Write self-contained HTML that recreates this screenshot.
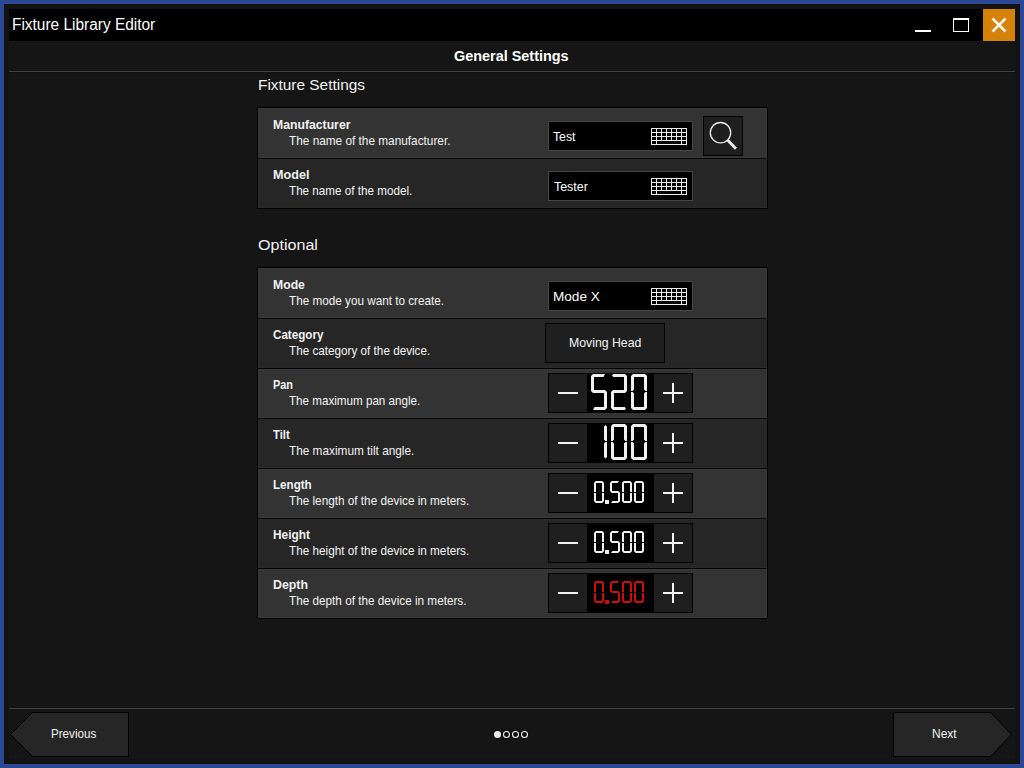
<!DOCTYPE html>
<html><head><meta charset="utf-8"><title>Fixture Library Editor</title>
<style>
html,body{margin:0;padding:0;}
body{width:1024px;height:768px;overflow:hidden;background:#2c4796;position:relative;font-family:"Liberation Sans", sans-serif;}
#win{position:absolute;left:4px;top:4px;width:1016px;height:760px;background:#121212;box-shadow:0 0 0 1px #2f4a9c, inset 0 0 0 1px #100f0a;}
#content{position:absolute;left:9px;top:9px;width:1006px;height:750px;background:#151515;}
#tb{position:absolute;left:9px;top:9px;width:1006px;height:32px;background:#000;}
#close{position:absolute;left:983px;top:9px;width:32px;height:32px;background:#d58308;}
.sep{position:absolute;left:9px;width:1006px;height:1px;background:#454545;box-shadow:0 -1px 0 #111,0 1px 0 #111;}
.t{position:absolute;white-space:nowrap;transform-origin:0 0;display:block;}
.row{position:absolute;left:257px;width:511px;box-sizing:border-box;border:1px solid #000;}
.row.a{background:#333333;box-shadow:inset 0 0 0 1px #393939;}
.row.b{background:#262626;box-shadow:inset 0 0 0 1px #2b2b2b;}
.fld{position:absolute;left:548px;width:145px;height:30px;box-sizing:border-box;border:1px solid #464646;background:#000;}
.kb{position:absolute;left:102px;top:6px;}
.btn{position:absolute;box-sizing:border-box;border:1px solid #000;background:#1f1f1f;}
.num{position:absolute;left:548px;width:145px;height:40px;box-sizing:border-box;background:#000;}
.nb{position:absolute;top:1px;height:38px;width:38px;background:#1f1f1f;}
.nb.l{left:1px;} .nb.r{left:106px;}
.ov{position:absolute;left:0;top:0;}
svg{display:block;}
</style></head><body>
<div id="win"></div><div id="content"></div>
<div id="tb"></div>
<svg style="position:absolute;left:905px;top:9px" width="110" height="32" viewBox="0 0 110 32">
<rect x="78" y="0" width="32" height="32" fill="#d58308"/>
<rect x="10" y="21" width="16" height="2" fill="#fff" shape-rendering="crispEdges"/>
<rect x="48.5" y="9.5" width="15" height="13" fill="none" stroke="#fff" stroke-width="1"/>
<rect x="48" y="9" width="16" height="2" fill="#fff" shape-rendering="crispEdges"/>
<path d="M87.5,9.5 L100.5,22.5 M100.5,9.5 L87.5,22.5" stroke="#f6f2ec" stroke-width="2.7" fill="none"/>
</svg>
<div class="sep" style="top:71px"></div>
<div class="sep" style="top:708px"></div>
<div class="row a" style="top:107px;height:52px"></div><div class="row b" style="top:158px;height:51px"></div>
<div class="row a" style="top:267px;height:52px"></div><div class="row b" style="top:318px;height:51px"></div><div class="row a" style="top:368px;height:51px"></div><div class="row b" style="top:418px;height:51px"></div><div class="row a" style="top:468px;height:51px"></div><div class="row b" style="top:518px;height:51px"></div><div class="row a" style="top:568px;height:51px"></div>
<div class="fld" style="top:121px"><svg class="kb" width="36" height="17" viewBox="0 0 36 17" shape-rendering="crispEdges"><g fill="#ececec"><rect x="0" y="0" width="36" height="1"/><rect x="0" y="4" width="36" height="1"/><rect x="0" y="8" width="36" height="1"/><rect x="0" y="12" width="36" height="1"/><rect x="0" y="16" width="36" height="1"/><rect x="0" y="0" width="1" height="17"/><rect x="5" y="0" width="1" height="17"/><rect x="10" y="0" width="1" height="13"/><rect x="15" y="0" width="1" height="13"/><rect x="20" y="0" width="1" height="13"/><rect x="25" y="0" width="1" height="13"/><rect x="30" y="0" width="1" height="17"/><rect x="35" y="0" width="1" height="17"/></g></svg></div><div class="fld" style="top:171px"><svg class="kb" width="36" height="17" viewBox="0 0 36 17" shape-rendering="crispEdges"><g fill="#ececec"><rect x="0" y="0" width="36" height="1"/><rect x="0" y="4" width="36" height="1"/><rect x="0" y="8" width="36" height="1"/><rect x="0" y="12" width="36" height="1"/><rect x="0" y="16" width="36" height="1"/><rect x="0" y="0" width="1" height="17"/><rect x="5" y="0" width="1" height="17"/><rect x="10" y="0" width="1" height="13"/><rect x="15" y="0" width="1" height="13"/><rect x="20" y="0" width="1" height="13"/><rect x="25" y="0" width="1" height="13"/><rect x="30" y="0" width="1" height="17"/><rect x="35" y="0" width="1" height="17"/></g></svg></div><div class="fld" style="top:281px"><svg class="kb" width="36" height="17" viewBox="0 0 36 17" shape-rendering="crispEdges"><g fill="#ececec"><rect x="0" y="0" width="36" height="1"/><rect x="0" y="4" width="36" height="1"/><rect x="0" y="8" width="36" height="1"/><rect x="0" y="12" width="36" height="1"/><rect x="0" y="16" width="36" height="1"/><rect x="0" y="0" width="1" height="17"/><rect x="5" y="0" width="1" height="17"/><rect x="10" y="0" width="1" height="13"/><rect x="15" y="0" width="1" height="13"/><rect x="20" y="0" width="1" height="13"/><rect x="25" y="0" width="1" height="13"/><rect x="30" y="0" width="1" height="17"/><rect x="35" y="0" width="1" height="17"/></g></svg></div>
<div class="btn" style="left:703px;top:116px;width:40px;height:40px"></div>
<svg style="position:absolute;left:703px;top:116px" width="40" height="40" viewBox="0 0 40 40">
<circle cx="17.5" cy="16.7" r="10.2" fill="none" stroke="#ececec" stroke-width="1.3"/>
<path d="M24.5,24.0 L33,32.8" stroke="#ececec" stroke-width="2.9" stroke-linecap="butt"/>
</svg>
<div class="btn" style="left:545px;top:323px;width:120px;height:40px"></div>
<div class="num" style="top:373px"><div class="nb l"></div><div class="nd"></div><div class="nb r"></div><svg class="ov" width="145" height="40" viewBox="0 0 145 40"><rect x="10" y="19" width="20" height="2" fill="#f4f4f4"/><rect x="115" y="19" width="20" height="2" fill="#f4f4f4"/><rect x="124" y="10" width="2" height="20" fill="#f4f4f4"/><path d="M43.00,3.00 L45.00,1.00 L57.00,1.00 L55.50,4.00 L46.00,4.00 L46.00,17.00 L57.00,17.00 L59.00,19.00 L59.00,35.00 L57.00,37.00 L45.00,37.00 L46.50,34.00 L56.00,34.00 L56.00,20.00 L45.00,20.00 L43.00,18.00ZM79.00,3.00 L77.00,1.00 L65.31,1.00 L64.00,2.50 L65.31,4.00 L76.00,4.00 L76.00,17.00 L65.00,17.00 L63.00,19.00 L63.00,35.00 L65.00,37.00 L76.69,37.00 L78.00,35.50 L76.69,34.00 L66.00,34.00 L66.00,20.00 L77.00,20.00 L79.00,18.00ZM83.00,3.00 L85.00,1.00 L97.00,1.00 L99.00,3.00 L99.00,18.00 L97.40,18.00 L96.00,16.60 L96.00,4.00 L86.00,4.00 L86.00,16.60 L84.60,18.00 L83.00,18.00ZM83.00,19.00 L84.60,19.00 L86.00,20.40 L86.00,34.00 L96.00,34.00 L96.00,20.40 L97.40,19.00 L99.00,19.00 L99.00,35.00 L97.00,37.00 L85.00,37.00 L83.00,35.00Z" fill="#f0f0f0"/></svg></div>
<div class="num" style="top:423px"><div class="nb l"></div><div class="nd"></div><div class="nb r"></div><svg class="ov" width="145" height="40" viewBox="0 0 145 40"><rect x="10" y="19" width="20" height="2" fill="#f4f4f4"/><rect x="115" y="19" width="20" height="2" fill="#f4f4f4"/><rect x="124" y="10" width="2" height="20" fill="#f4f4f4"/><path d="M56.00,3.50 L57.50,2.00 L59.00,3.50 L59.00,18.00 L57.40,18.00 L56.00,16.60ZM56.00,20.40 L57.40,19.00 L59.00,19.00 L59.00,34.00 L57.50,35.50 L56.00,34.00ZM63.00,3.00 L65.00,1.00 L77.00,1.00 L79.00,3.00 L79.00,18.00 L77.40,18.00 L76.00,16.60 L76.00,4.00 L66.00,4.00 L66.00,16.60 L64.60,18.00 L63.00,18.00ZM63.00,19.00 L64.60,19.00 L66.00,20.40 L66.00,34.00 L76.00,34.00 L76.00,20.40 L77.40,19.00 L79.00,19.00 L79.00,35.00 L77.00,37.00 L65.00,37.00 L63.00,35.00ZM83.00,3.00 L85.00,1.00 L97.00,1.00 L99.00,3.00 L99.00,18.00 L97.40,18.00 L96.00,16.60 L96.00,4.00 L86.00,4.00 L86.00,16.60 L84.60,18.00 L83.00,18.00ZM83.00,19.00 L84.60,19.00 L86.00,20.40 L86.00,34.00 L96.00,34.00 L96.00,20.40 L97.40,19.00 L99.00,19.00 L99.00,35.00 L97.00,37.00 L85.00,37.00 L83.00,35.00Z" fill="#f0f0f0"/></svg></div>
<div class="num" style="top:473px"><div class="nb l"></div><div class="nd"></div><div class="nb r"></div><svg class="ov" width="145" height="40" viewBox="0 0 145 40"><rect x="10" y="19" width="20" height="2" fill="#f4f4f4"/><rect x="115" y="19" width="20" height="2" fill="#f4f4f4"/><rect x="124" y="10" width="2" height="20" fill="#f4f4f4"/><rect x="57" y="27" width="4" height="4" fill="#f0f0f0"/><path d="M46.00,9.80 L47.80,8.00 L54.20,8.00 L56.00,9.80 L56.00,19.10 L54.45,19.10 L54.00,18.65 L54.00,10.00 L48.00,10.00 L48.00,18.65 L47.55,19.10 L46.00,19.10ZM46.00,19.90 L47.55,19.90 L48.00,20.35 L48.00,28.00 L54.00,28.00 L54.00,20.35 L54.45,19.90 L56.00,19.90 L56.00,28.20 L54.20,30.00 L47.80,30.00 L46.00,28.20ZM62.00,9.80 L63.80,8.00 L71.00,8.00 L69.60,10.00 L64.00,10.00 L64.00,18.00 L70.20,18.00 L72.00,19.80 L72.00,28.20 L70.20,30.00 L63.00,30.00 L64.40,28.00 L70.00,28.00 L70.00,20.00 L63.80,20.00 L62.00,18.20ZM74.00,9.80 L75.80,8.00 L82.20,8.00 L84.00,9.80 L84.00,19.10 L82.45,19.10 L82.00,18.65 L82.00,10.00 L76.00,10.00 L76.00,18.65 L75.55,19.10 L74.00,19.10ZM74.00,19.90 L75.55,19.90 L76.00,20.35 L76.00,28.00 L82.00,28.00 L82.00,20.35 L82.45,19.90 L84.00,19.90 L84.00,28.20 L82.20,30.00 L75.80,30.00 L74.00,28.20ZM86.00,9.80 L87.80,8.00 L94.20,8.00 L96.00,9.80 L96.00,19.10 L94.45,19.10 L94.00,18.65 L94.00,10.00 L88.00,10.00 L88.00,18.65 L87.55,19.10 L86.00,19.10ZM86.00,19.90 L87.55,19.90 L88.00,20.35 L88.00,28.00 L94.00,28.00 L94.00,20.35 L94.45,19.90 L96.00,19.90 L96.00,28.20 L94.20,30.00 L87.80,30.00 L86.00,28.20Z" fill="#f0f0f0"/></svg></div>
<div class="num" style="top:523px"><div class="nb l"></div><div class="nd"></div><div class="nb r"></div><svg class="ov" width="145" height="40" viewBox="0 0 145 40"><rect x="10" y="19" width="20" height="2" fill="#f4f4f4"/><rect x="115" y="19" width="20" height="2" fill="#f4f4f4"/><rect x="124" y="10" width="2" height="20" fill="#f4f4f4"/><rect x="57" y="27" width="4" height="4" fill="#f0f0f0"/><path d="M46.00,9.80 L47.80,8.00 L54.20,8.00 L56.00,9.80 L56.00,19.10 L54.45,19.10 L54.00,18.65 L54.00,10.00 L48.00,10.00 L48.00,18.65 L47.55,19.10 L46.00,19.10ZM46.00,19.90 L47.55,19.90 L48.00,20.35 L48.00,28.00 L54.00,28.00 L54.00,20.35 L54.45,19.90 L56.00,19.90 L56.00,28.20 L54.20,30.00 L47.80,30.00 L46.00,28.20ZM62.00,9.80 L63.80,8.00 L71.00,8.00 L69.60,10.00 L64.00,10.00 L64.00,18.00 L70.20,18.00 L72.00,19.80 L72.00,28.20 L70.20,30.00 L63.00,30.00 L64.40,28.00 L70.00,28.00 L70.00,20.00 L63.80,20.00 L62.00,18.20ZM74.00,9.80 L75.80,8.00 L82.20,8.00 L84.00,9.80 L84.00,19.10 L82.45,19.10 L82.00,18.65 L82.00,10.00 L76.00,10.00 L76.00,18.65 L75.55,19.10 L74.00,19.10ZM74.00,19.90 L75.55,19.90 L76.00,20.35 L76.00,28.00 L82.00,28.00 L82.00,20.35 L82.45,19.90 L84.00,19.90 L84.00,28.20 L82.20,30.00 L75.80,30.00 L74.00,28.20ZM86.00,9.80 L87.80,8.00 L94.20,8.00 L96.00,9.80 L96.00,19.10 L94.45,19.10 L94.00,18.65 L94.00,10.00 L88.00,10.00 L88.00,18.65 L87.55,19.10 L86.00,19.10ZM86.00,19.90 L87.55,19.90 L88.00,20.35 L88.00,28.00 L94.00,28.00 L94.00,20.35 L94.45,19.90 L96.00,19.90 L96.00,28.20 L94.20,30.00 L87.80,30.00 L86.00,28.20Z" fill="#f0f0f0"/></svg></div>
<div class="num" style="top:573px"><div class="nb l"></div><div class="nd"></div><div class="nb r"></div><svg class="ov" width="145" height="40" viewBox="0 0 145 40"><rect x="10" y="19" width="20" height="2" fill="#f4f4f4"/><rect x="115" y="19" width="20" height="2" fill="#f4f4f4"/><rect x="124" y="10" width="2" height="20" fill="#f4f4f4"/><rect x="57" y="27" width="4" height="4" fill="#d20b0b"/><path d="M46.00,9.80 L47.80,8.00 L54.20,8.00 L56.00,9.80 L56.00,19.10 L54.45,19.10 L54.00,18.65 L54.00,10.00 L48.00,10.00 L48.00,18.65 L47.55,19.10 L46.00,19.10ZM46.00,19.90 L47.55,19.90 L48.00,20.35 L48.00,28.00 L54.00,28.00 L54.00,20.35 L54.45,19.90 L56.00,19.90 L56.00,28.20 L54.20,30.00 L47.80,30.00 L46.00,28.20ZM62.00,9.80 L63.80,8.00 L71.00,8.00 L69.60,10.00 L64.00,10.00 L64.00,18.00 L70.20,18.00 L72.00,19.80 L72.00,28.20 L70.20,30.00 L63.00,30.00 L64.40,28.00 L70.00,28.00 L70.00,20.00 L63.80,20.00 L62.00,18.20ZM74.00,9.80 L75.80,8.00 L82.20,8.00 L84.00,9.80 L84.00,19.10 L82.45,19.10 L82.00,18.65 L82.00,10.00 L76.00,10.00 L76.00,18.65 L75.55,19.10 L74.00,19.10ZM74.00,19.90 L75.55,19.90 L76.00,20.35 L76.00,28.00 L82.00,28.00 L82.00,20.35 L82.45,19.90 L84.00,19.90 L84.00,28.20 L82.20,30.00 L75.80,30.00 L74.00,28.20ZM86.00,9.80 L87.80,8.00 L94.20,8.00 L96.00,9.80 L96.00,19.10 L94.45,19.10 L94.00,18.65 L94.00,10.00 L88.00,10.00 L88.00,18.65 L87.55,19.10 L86.00,19.10ZM86.00,19.90 L87.55,19.90 L88.00,20.35 L88.00,28.00 L94.00,28.00 L94.00,20.35 L94.45,19.90 L96.00,19.90 L96.00,28.20 L94.20,30.00 L87.80,30.00 L86.00,28.20Z" fill="#d20b0b"/></svg></div>
<svg style="position:absolute;left:0;top:708px" width="1024" height="56" viewBox="0 708 1024 56">
<path d="M10.5,734.5 L32.5,712.5 L128.5,712.5 L128.5,756.5 L32.5,756.5 Z" fill="#262626" stroke="#000" stroke-width="1"/>
<path d="M1011.5,734.5 L990.5,712.5 L893.5,712.5 L893.5,756.5 L990.5,756.5 Z" fill="#262626" stroke="#000" stroke-width="1"/>
<circle cx="497.5" cy="734.5" r="4.3" fill="#0f0f0f"/><circle cx="506.5" cy="734.5" r="4.3" fill="#0f0f0f"/><circle cx="515.5" cy="734.5" r="4.3" fill="#0f0f0f"/><circle cx="524.5" cy="734.5" r="4.3" fill="#0f0f0f"/>
<circle cx="497.5" cy="734.5" r="3.55" fill="#ebebeb"/>
<circle cx="506.5" cy="734.5" r="3" fill="#101010" stroke="#f0f0f0" stroke-width="1.1"/>
<circle cx="515.5" cy="734.5" r="3" fill="#101010" stroke="#f0f0f0" stroke-width="1.1"/>
<circle cx="524.5" cy="734.5" r="3" fill="#101010" stroke="#f0f0f0" stroke-width="1.1"/>
</svg>
<span class="t" style="left:12.29px;top:15.46px;font-size:16px;line-height:20px;font-weight:400;color:#ffffff;transform:scaleX(0.9646)">Fixture Library Editor</span>
<span class="t" style="left:454.08px;top:46.98px;font-size:14.5px;line-height:18px;font-weight:700;color:#ffffff;transform:scaleX(0.9947)">General Settings</span>
<span class="t" style="left:257.56px;top:74.73px;font-size:15.5px;line-height:19px;font-weight:400;color:#f2f2f2;transform:scaleX(0.9932)">Fixture Settings</span>
<span class="t" style="left:257.77px;top:234.73px;font-size:15.5px;line-height:19px;font-weight:400;color:#f2f2f2;transform:scaleX(1.0384)">Optional</span>
<span class="t" style="left:272.98px;top:116.50px;font-size:13px;line-height:16px;font-weight:700;color:#f2f2f2;transform:scaleX(0.9403)">Manufacturer</span>
<span class="t" style="left:289.27px;top:132.70px;font-size:13px;line-height:16px;font-weight:400;color:#f2f2f2;transform:scaleX(0.9083)">The name of the manufacturer.</span>
<span class="t" style="left:272.95px;top:166.50px;font-size:13px;line-height:16px;font-weight:700;color:#f2f2f2;transform:scaleX(0.9692)">Model</span>
<span class="t" style="left:289.28px;top:182.70px;font-size:13px;line-height:16px;font-weight:400;color:#f2f2f2;transform:scaleX(0.8975)">The name of the model.</span>
<span class="t" style="left:272.98px;top:276.50px;font-size:13px;line-height:16px;font-weight:700;color:#f2f2f2;transform:scaleX(0.9395)">Mode</span>
<span class="t" style="left:289.27px;top:292.70px;font-size:13px;line-height:16px;font-weight:400;color:#f2f2f2;transform:scaleX(0.9015)">The mode you want to create.</span>
<span class="t" style="left:272.85px;top:326.50px;font-size:13px;line-height:16px;font-weight:700;color:#f2f2f2;transform:scaleX(0.8951)">Category</span>
<span class="t" style="left:289.27px;top:342.70px;font-size:13px;line-height:16px;font-weight:400;color:#f2f2f2;transform:scaleX(0.9007)">The category of the device.</span>
<span class="t" style="left:273.07px;top:376.50px;font-size:13px;line-height:16px;font-weight:700;color:#f2f2f2;transform:scaleX(0.8362)">Pan</span>
<span class="t" style="left:289.28px;top:392.70px;font-size:13px;line-height:16px;font-weight:400;color:#f2f2f2;transform:scaleX(0.8947)">The maximum pan angle.</span>
<span class="t" style="left:273.19px;top:426.50px;font-size:13px;line-height:16px;font-weight:700;color:#f2f2f2;transform:scaleX(0.8632)">Tilt</span>
<span class="t" style="left:289.27px;top:442.70px;font-size:13px;line-height:16px;font-weight:400;color:#f2f2f2;transform:scaleX(0.9081)">The maximum tilt angle.</span>
<span class="t" style="left:273.02px;top:476.50px;font-size:13px;line-height:16px;font-weight:700;color:#f2f2f2;transform:scaleX(0.8925)">Length</span>
<span class="t" style="left:289.27px;top:492.70px;font-size:13px;line-height:16px;font-weight:400;color:#f2f2f2;transform:scaleX(0.9038)">The length of the device in meters.</span>
<span class="t" style="left:273.00px;top:526.50px;font-size:13px;line-height:16px;font-weight:700;color:#f2f2f2;transform:scaleX(0.9117)">Height</span>
<span class="t" style="left:289.27px;top:542.70px;font-size:13px;line-height:16px;font-weight:400;color:#f2f2f2;transform:scaleX(0.9038)">The height of the device in meters.</span>
<span class="t" style="left:272.97px;top:576.50px;font-size:13px;line-height:16px;font-weight:700;color:#f2f2f2;transform:scaleX(0.9509)">Depth</span>
<span class="t" style="left:289.27px;top:592.70px;font-size:13px;line-height:16px;font-weight:400;color:#f2f2f2;transform:scaleX(0.9030)">The depth of the device in meters.</span>
<span class="t" style="left:553.06px;top:128.50px;font-size:13px;line-height:16px;font-weight:400;color:#ffffff;transform:scaleX(0.9404)">Test</span>
<span class="t" style="left:553.56px;top:178.50px;font-size:13px;line-height:16px;font-weight:400;color:#ffffff;transform:scaleX(0.9548)">Tester</span>
<span class="t" style="left:552.76px;top:288.50px;font-size:13px;line-height:16px;font-weight:400;color:#ffffff;transform:scaleX(1.0437)">Mode X</span>
<span class="t" style="left:568.66px;top:334.50px;font-size:13px;line-height:16px;font-weight:400;color:#f2f2f2;transform:scaleX(0.9445)">Moving Head</span>
<span class="t" style="left:50.71px;top:725.50px;font-size:13px;line-height:16px;font-weight:400;color:#f2f2f2;transform:scaleX(0.8936)">Previous</span>
<span class="t" style="left:931.68px;top:725.50px;font-size:13px;line-height:16px;font-weight:400;color:#f2f2f2;transform:scaleX(0.9210)">Next</span>
</body></html>
